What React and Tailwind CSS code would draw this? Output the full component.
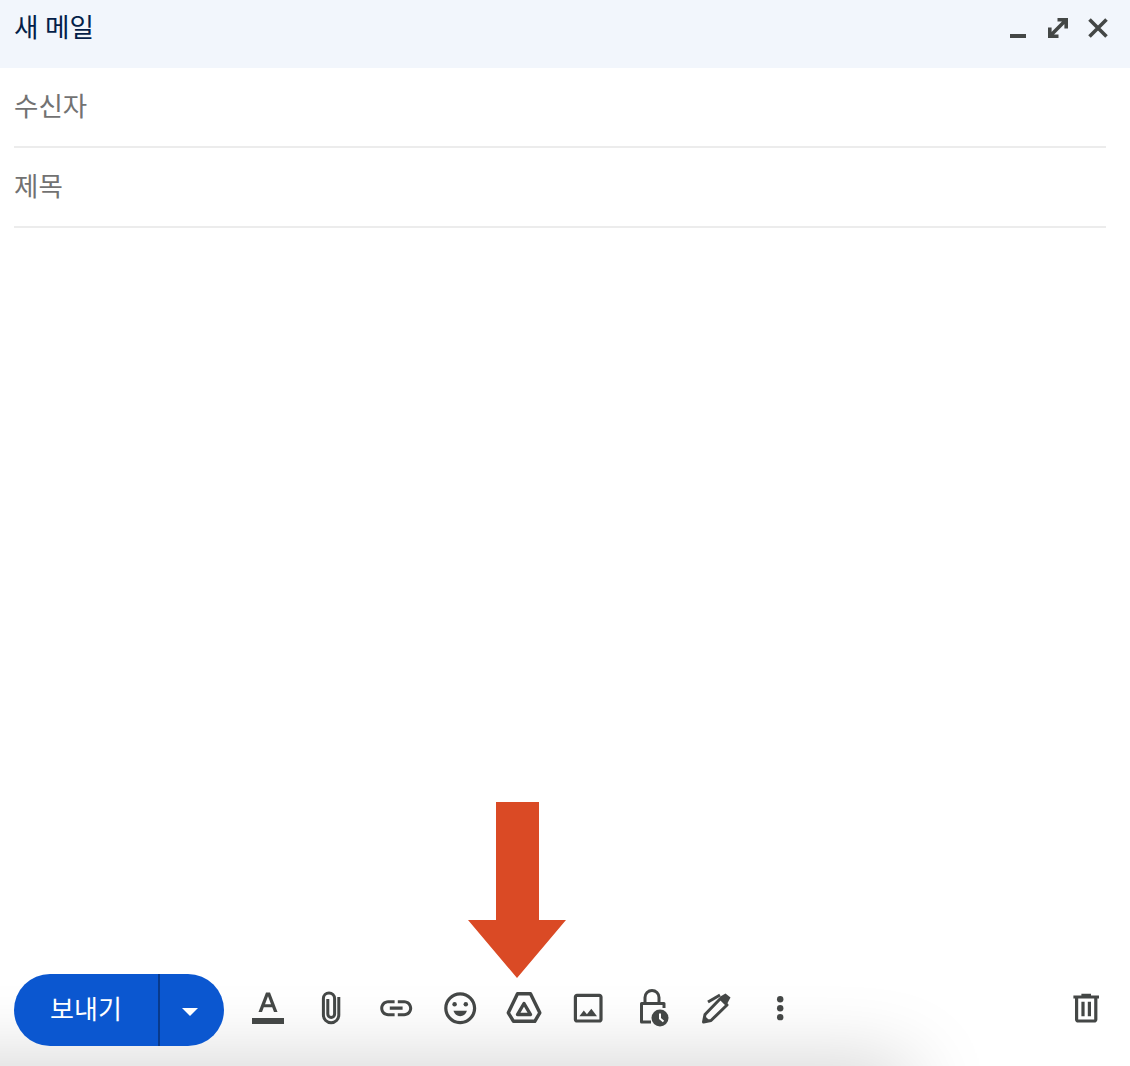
const C = "#444746";

function M({ children }) {
  return (
    <svg viewBox="0 0 24 24" className="w-[38.4px] h-[38.4px]" fill={C}>
      {children}
    </svg>
  );
}
function P({ children }) {
  return (
    <svg viewBox="0 0 48 48" className="w-12 h-12" fill="none" stroke={C} strokeWidth="3">
      {children}
    </svg>
  );
}
function Slot({ children }) {
  return <div className="w-16 h-12 flex items-center justify-center shrink-0">{children}</div>;
}
function Field({ label }) {
  return (
    <div className="h-20 ml-[14px] mr-6 border-b-2 border-[#ececec] flex items-center text-[26.5px] leading-[36px] text-[#727272]">
      {label}
    </div>
  );
}

export default function App() {
  return (
    <div className="relative w-[1130px] h-[1066px] overflow-hidden bg-white flex flex-col font-['Roboto','Noto_Sans_CJK_KR',sans-serif]">
      <div className="absolute left-0 bottom-0 w-full h-[100px] overflow-hidden pointer-events-none">
        <div className="absolute left-[-100px] top-[100px] w-[1010px] h-[60px] shadow-[0_0_80px_rgba(0,0,0,0.21)] bg-[#ccc]" />
      </div>

      <header className="relative h-[68px] shrink-0 bg-[#f2f6fc] flex items-center justify-between pl-[14px] pr-3 pb-3">
        <h1 className="text-[26.6px] leading-[36px] text-[#041e49] font-normal">새 메일</h1>
        <div className="flex">
          <svg viewBox="0 0 40 40" className="w-10 h-10" fill={C}>
            <rect x="12" y="26" width="16" height="4" />
          </svg>
          <svg viewBox="0 0 40 40" className="w-10 h-10" fill="none" stroke={C} strokeWidth="3.6">
            <path d="M19.5 11.8H28.2V20.5M28.2 11.8L11.8 28.2M11.8 19.5V28.2H20.5" />
          </svg>
          <svg viewBox="0 0 40 40" className="w-10 h-10" fill="none" stroke={C} strokeWidth="3.6">
            <path d="M11.5 11.5L28.5 28.5M28.5 11.5L11.5 28.5" />
          </svg>
        </div>
      </header>

      <Field label="수신자" />
      <Field label="제목" />

      <div className="flex-1" />

      <svg
        viewBox="0 0 98 176"
        className="absolute left-[468px] top-[802px] w-[98px] h-[176px]"
        fill="#da4a25"
      >
        <path d="M28 0H71V118H98L49 176L0 118H28Z" />
      </svg>

      <footer className="relative flex items-center pl-[14px] pr-3 pb-5">
        <div className="flex h-[72px] w-[210px] rounded-full bg-[#0b57d0] text-white overflow-hidden shrink-0">
          <div className="w-[144px] flex items-center justify-center text-[26px] leading-[36px]">보내기</div>
          <div className="w-0.5 bg-[#083a8c]" />
          <div className="flex-1 flex items-center justify-center pr-1 pt-1">
            <svg viewBox="0 0 16 8" className="w-4 h-2" fill="white">
              <path d="M0 0H16L8 8Z" />
            </svg>
          </div>
        </div>

        <div className="flex ml-3 flex-1 mb-1">
          <Slot>
            <P>
              <path
                fill={C}
                stroke="none"
                fillRule="evenodd"
                d="M22 8.5H26L33.5 28H30L28.2 23.3H19.8L18 28H14.5ZM21 20.3H27L24 12.3Z"
              />
              <rect x="8" y="34" width="32" height="6" fill={C} stroke="none" />
            </P>
          </Slot>
          <Slot>
            <P>
              <path d="M30.8 13V31A7.7 7.7 0 0 1 15.4 31V14.5A5.6 5.6 0 0 1 26.6 14.5V30A3.4 3.4 0 0 1 19.8 30V15" />
            </P>
          </Slot>
          <Slot>
            <M>
              <path d="M3.9 12c0-1.71 1.39-3.1 3.1-3.1h4V7H7c-2.76 0-5 2.24-5 5s2.24 5 5 5h4v-1.9H7c-1.71 0-3.1-1.39-3.1-3.1zM8 13h8v-2H8v2zm9-6h-4v1.9h4c1.71 0 3.1 1.39 3.1 3.1s-1.39 3.1-3.1 3.1h-4V17h4c2.76 0 5-2.24 5-5s-2.24-5-5-5z" />
            </M>
          </Slot>
          <Slot>
            <M>
              <circle cx="15.5" cy="9.5" r="1.4" />
              <circle cx="8.5" cy="9.5" r="1.4" />
              <path d="M12 17c2 0 3.6-1.3 4.2-3.4H7.8C8.4 15.7 10 17 12 17z" />
              <path d="M11.99 2C6.47 2 2 6.48 2 12s4.47 10 9.99 10C17.52 22 22 17.52 22 12S17.52 2 11.99 2zM12 20c-4.42 0-8-3.58-8-8s3.58-8 8-8 8 3.58 8 8-3.58 8-8 8z" />
            </M>
          </Slot>
          <Slot>
            <P>
              <path strokeWidth="3.4" strokeLinejoin="round" d="M17.5 9.7H30.5L39.8 28.8L34.8 37.3H13.5L8.3 28.8Z" />
              <path strokeWidth="3.4" strokeLinejoin="round" d="M24 19.5L30.5 30.5H17.5Z" />
            </P>
          </Slot>
          <Slot>
            <M>
              <path d="M19 3H5c-1.1 0-2 .9-2 2v14c0 1.1.9 2 2 2h14c1.1 0 2-.9 2-2V5c0-1.1-.9-2-2-2zm0 16H5V5h14v14z" />
              <path d="M13.96 12.29l-2.75 3.54-1.96-2.36L6.5 17h11l-3.54-4.71z" />
            </M>
          </Slot>
          <Slot>
            <P>
              <path strokeLinejoin="round" d="M36 24V19.5H13.5V38H23" />
              <path d="M17 19V13.5A7 7 0 0 1 31 13.5V19" />
              <circle cx="32" cy="34" r="8.5" fill={C} stroke="none" />
              <path d="M32 29.5V34.5L35.5 37.5" stroke="white" strokeWidth="2" />
            </P>
          </Slot>
          <Slot>
            <P>
              <path d="M28.5 14.5L35 21L19 36.5L11.5 38L13 30.5Z" strokeLinejoin="round" />
              <path d="M16 18L28 11" />
              <path d="M27.5 13L33.5 9.5L38.5 13.5L35 20Z" fill={C} stroke="none" />
              <path d="M11 39L13 32L18 37Z" fill={C} stroke="none" />
            </P>
          </Slot>
          <Slot>
            <M>
              <circle cx="12" cy="6.4" r="2" />
              <circle cx="12" cy="12" r="2" />
              <circle cx="12" cy="17.6" r="2" />
            </M>
          </Slot>
          <div className="flex-1" />
          <Slot>
            <M>
              <path d="M15 4V3H9v1H4v2h1v13c0 1.1.9 2 2 2h10c1.1 0 2-.9 2-2V6h1V4h-5zm2 15H7V6h10v13zM9 8h2v9H9zm4 0h2v9h-2z" />
            </M>
          </Slot>
        </div>
      </footer>
    </div>
  );
}
